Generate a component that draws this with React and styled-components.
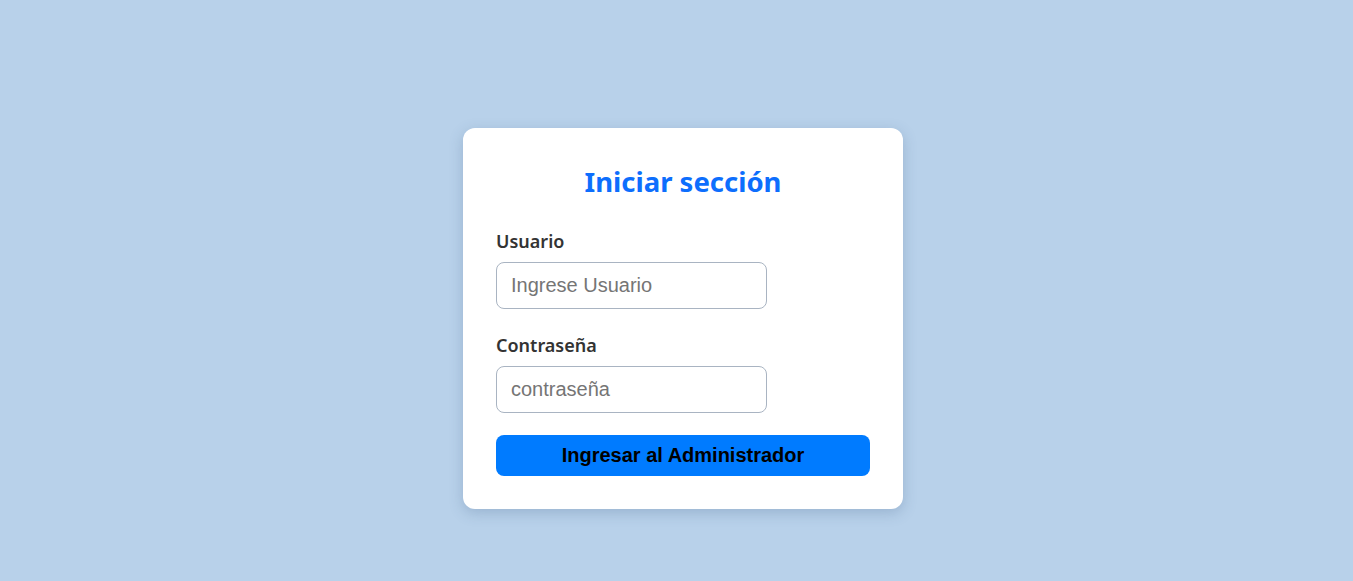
import React from "react";
import styled, { createGlobalStyle } from "styled-components";

const Global = createGlobalStyle`
  html, body { margin: 0; padding: 0; }
  body { background: #b8d1ea; font-family: "Noto Sans", "Open Sans", sans-serif; }
`;

const Page = styled.div`
  min-height: 581px;
  display: flex;
  justify-content: center;
  align-items: flex-start;
  padding: 128px 0 0 13px;
  box-sizing: border-box;
`;

const Card = styled.form`
  width: 440px;
  box-sizing: border-box;
  background: #fff;
  border-radius: 12px;
  padding: 33px 33px 33px;
  box-shadow: 0 4px 14px rgba(60, 90, 130, 0.25);
  display: flex;
  flex-direction: column;
`;

const Title = styled.h2`
  margin: 0 0 26px;
  text-align: center;
  color: #0d6efd;
  font-family: "Noto Sans", sans-serif;
  font-size: 27.5px;
  font-weight: 700;
  line-height: 42px;
`;

const Field = styled.div`
  display: flex;
  flex-direction: column;
  margin-bottom: ${(p) => p.$gap}px;
`;

const Label = styled.label`
  font-family: "Noto Sans", sans-serif;
  font-size: 18px;
  font-weight: 600;
  color: #333;
  line-height: 24px;
  margin-bottom: 9px;
`;

const Input = styled.input`
  width: 271px;
  height: 47px;
  box-sizing: border-box;
  border: 1px solid #a9b4c2;
  border-radius: 8px;
  padding: 0 14px;
  font-family: "Liberation Sans", Arial, sans-serif;
  font-size: 20px;
  color: #333;
  outline: none;
  &::placeholder { color: #757575; }
`;

const Button = styled.button`
  height: 41px;
  width: 100%;
  border: none;
  border-radius: 8px;
  background: #007bff;
  color: #000;
  font-family: "Liberation Sans", Arial, sans-serif;
  font-size: 20px;
  font-weight: 700;
  cursor: pointer;
`;

export default function App() {
  return (
    <>
      <Global />
      <Page>
        <Card onSubmit={(e) => e.preventDefault()}>
          <Title>Iniciar sección</Title>
          <Field $gap={24}>
            <Label>Usuario</Label>
            <Input placeholder="Ingrese Usuario" />
          </Field>
          <Field $gap={22}>
            <Label>Contraseña</Label>
            <Input type="password" placeholder="contraseña" />
          </Field>
          <Button type="submit">Ingresar al Administrador</Button>
        </Card>
      </Page>
    </>
  );
}
